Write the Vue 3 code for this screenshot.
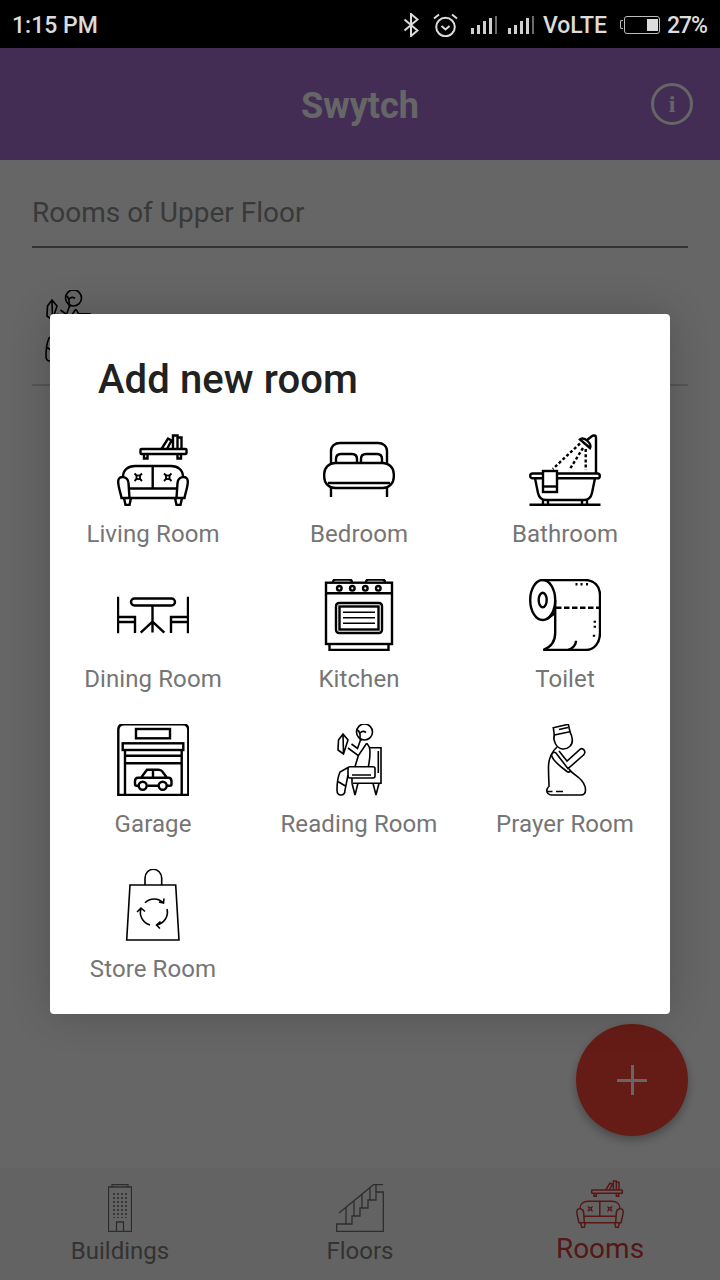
<script setup>
const rooms = [
  { name: 'Living Room', icon: 'sofa' },
  { name: 'Bedroom', icon: 'bed' },
  { name: 'Bathroom', icon: 'bath' },
  { name: 'Dining Room', icon: 'dining' },
  { name: 'Kitchen', icon: 'oven' },
  { name: 'Toilet', icon: 'toilet' },
  { name: 'Garage', icon: 'garage' },
  { name: 'Reading Room', icon: 'reader', thin: true },
  { name: 'Prayer Room', icon: 'prayer', thin: true },
  { name: 'Store Room', icon: 'store', thin: true },
]
</script>

<template>
  <div class="phone">
    <svg class="sprite" xmlns="http://www.w3.org/2000/svg">
      <symbol id="sofa" viewBox="0 0 72 72">
        <rect x="23.5" y="15" width="46" height="5" rx="1" />
        <path d="M27 20v4.500h3.500V20M60.500 20v4.500H64V20" />
        <path d="M44.500 15L51 4.500l3.500 2L50 15M56 15V1.500h4.500V15M60.500 15V3.500h4V15" />
        <path d="M6 43c0-7 5-11 12-11h36c7 0 12 4 12 11M35.700 32v22.500M12 54.500h48M12 64h48" />
        <path d="M12.500 64l-1-15c-.5-7-10-8-10.300-2-.2 6 2.800 13 3.300 17z" />
        <path d="M59.500 64l1-15c.5-7 10-8 10.300-2 .2 6-2.800 13-3.300 17z" />
        <path d="M7 64l1.500 7h4l1.500-7M58 64l1.500 7h4l1.500-7" />
        <g stroke-width="1.800">
          <path d="M17.500 39.500l2.500 2.500M25 39.500L22.500 42M17.500 47l2.500-2.500M25 47l-2.500-2.500M47 39.500l2.500 2.500M54.500 39.500L52 42M47 47l2.500-2.500M54.500 47L52 44.500" />
          <rect x="19.500" y="41.500" width="3.500" height="3.500" />
          <rect x="49" y="41.500" width="3.500" height="3.500" />
        </g>
      </symbol>
      <symbol id="bed" viewBox="0 0 72 72">
        <path d="M8 29V17c0-5 4-8 9-8h38c5 0 9 3 9 8v12" />
        <path d="M13 29v-4c0-3 2-5 5-5h11c3 0 5 2 5 5v4M38 29v-4c0-3 2-5 5-5h11c3 0 5 2 5 5v4" />
        <rect x="1.200" y="29" width="69.600" height="25" rx="11" />
        <path d="M5 49h62M8 54v9M64 54v9" />
      </symbol>
      <symbol id="bath" viewBox="0 0 72 72">
        <path d="M0.500 70.700h71M14 66v4.700h5V66M53 66v4.700h5V66" />
        <rect x="1.200" y="39.500" width="69.600" height="4.800" rx="2.400" />
        <path d="M6 44.300l3 14.700c1 4.500 4 7 8 7h38c4 0 7-2.500 8-7l3-14.700" />
        <rect x="14" y="37" width="14" height="21" fill="#fff" />
        <path d="M14 52.500h14" />
        <path d="M67 39.500V3.500c0-2.500-3-2.500-4.500-1L58 6" />
        <path d="M51 5.500c2-1.500 5-1 7.500 1.500 2.500 2.500 3.500 5 2.500 7z" />
        <path d="M51 9.500L23.700 35M54 14L40.300 36M56.700 15v21" stroke-dasharray="3 2.200" />
      </symbol>
      <symbol id="dining" viewBox="0 0 72 72">
        <rect x="14" y="19.500" width="44" height="7" rx="3.500" />
        <path d="M35.500 26.500v27M35.500 42.700L23.700 53.700M35.500 42.700L47.300 53.700" />
        <path d="M1 17.700v36.600M1 38h17v16M1 43h17" />
        <path d="M71 17.700v36.600M71 38H54v16M71 43H54" />
      </symbol>
      <symbol id="oven" viewBox="0 0 72 72">
        <path d="M10 3.500c0-2 1-3 3-3h13c2 0 3 1 3 3M43 3.500c0-2 1-3 3-3h13c2 0 3 1 3 3" />
        <rect x="3" y="3.700" width="66" height="61.300" />
        <path d="M3 14.300h66M6.500 65v6h59v-6" />
        <circle cx="16.300" cy="9.300" r="2.300" />
        <circle cx="29.300" cy="9.300" r="2.300" />
        <circle cx="42.300" cy="9.300" r="2.300" />
        <circle cx="55.300" cy="9.300" r="2.300" />
        <rect x="13" y="24" width="46" height="30" rx="3" />
        <rect x="16.500" y="27.500" width="39" height="23" />
        <path d="M20 33.300h32M20 38.700h32M20 44.300h32" stroke-width="1.600" />
      </symbol>
      <symbol id="toilet" viewBox="0 0 72 72">
        <ellipse cx="13.700" cy="21" rx="12.500" ry="20" />
        <ellipse cx="13.700" cy="21" rx="4" ry="7.300" />
        <path d="M13.700 1H56c9 0 15 6 15 15v38c0 10-6 17-14 17H14.300" />
        <path d="M26.200 21v33c0 8-4 14-12 17M17.700 40.300L26 34M47 61.700c0 4-3 8-7.700 9.300" />
        <path d="M27 28.700h44" stroke-dasharray="5.500 2.500" />
        <path d="M46.500 5.300h2M51.500 5.300h2M57 5.300h2M65.800 41.700v2M65.800 46.700v2M65 55.700v2" />
      </symbol>
      <symbol id="garage" viewBox="0 0 72 72">
        <path d="M1.300 71V6c0-3.500 2-5.700 5.500-5.700h59c3.500 0 5.500 2.200 5.500 5.700v65z" />
        <rect x="19" y="5" width="34" height="9.300" />
        <rect x="5.700" y="19.300" width="60.600" height="6.700" />
        <path d="M8 26v45M64.700 26v45M8 31.700h56.700M8 39.300h56.700" />
        <path d="M21 61.700h-1.500c-1 0-1.500-.5-1.500-1.500v-3c0-2 1-3.500 3-3.500h3l6-8h11.500c2 0 3 .5 4 2l4.500 6h1.500c2 0 3 1.500 3 3.500v3c0 1-.5 1.500-1.500 1.500h-3M30.500 61.700h10.500M24 53.700h26M36 45.700v8" />
        <circle cx="25.700" cy="61.700" r="4" />
        <circle cx="45.700" cy="61.700" r="4" />
      </symbol>
      <symbol id="reader" viewBox="0 0 72 72">
        <circle cx="41.500" cy="8" r="8" />
        <path d="M34.500 6c2 1.500 3 4 2.500 7.500-.2 1.500.5 2.500 1.500 3M37 9c1.500-1.500 4-2 6-.5" />
        <path d="M15.500 16l4.500-6 5 6-4.500 14-5.500-4zM20 10l.5 20" />
        <path d="M25 24l10.300 7.700 8.400-12.400M28.500 20l6 4.500 3-8.500M43.700 19.300c2.500 2.500 3.300 5 3.300 8.400 0 5-.5 10-1.700 15M35.300 31.700L32 42.700" />
        <path d="M46 23.700h12v35.600H30M55.300 27v22" />
        <rect x="25" y="42.700" width="27" height="11.300" rx="2" />
        <path d="M29 51h19M29 54v5.300M29 59.300l3 11.700 3-11.700M50 59.300l3 11.700 3-11.700" />
        <path d="M25 43.500L17 48c-3 7-3 14-3 18 0 4 2 5 4 5 3 0 4-2 4-5l3-15M15.300 57.700l6.700 4" />
      </symbol>
      <symbol id="prayer" viewBox="0 0 72 72">
        <path d="M24.300 3.700l15-3.400 1.700 7.400-15.700 3.300zM30 5.500l9 -2" />
        <path d="M25.300 11c-1.500 5 1.500 13 8 14 6 .5 10.500-4 10-9.500-.2-3-1.500-6-2.500-7.800" />
        <path d="M28 23c-5 4-8.500 12-8.500 20 0 8 .5 16 .5 20" />
        <path d="M19.500 63c-1.500 1.500-2.500 4-.5 6.500 1 1 2 1.500 3.500 1.500H52c3 0 4.500-2 4.500-5 0-5-2.500-9-7.500-13-4-3-7-5-9-8" />
        <path d="M22.500 30.500c1-2 3-3 4.500-1.500l12 15.700L54.500 31c2-1.500 1.500-4.500 0-5.500-1-1-2-1-3-.5L38 37 30 27" />
        <path d="M22.500 30.500c0 3 4 8.500 15.500 17 1.500 1 3 .5 4-.5" />
        <path d="M18 67.500h5.500M27 67.500h7" />
      </symbol>
      <symbol id="store" viewBox="0 0 72 72">
        <path d="M13 16h45.700L62 71H9.700z" />
        <path d="M28 16V9c0-5 4-8.700 8.300-8.700S44.700 4 44.700 9v7" />
        <path d="M28 33.700a13 13 0 0 1 18.500.2M42 33l4.500 1 .5-4.500" />
        <path d="M50 40a13 13 0 0 1-10.500 16M43.500 52.500l-4 3.500 3.500 3.500" />
        <path d="M33 56a13 13 0 0 1-9-16.500M20 43l4-4 4 3.500" />
      </symbol>
      <symbol id="building" viewBox="0 0 24 48">
        <path d="M0.500 47.500V3h23v44.500zM4 3V0.500h16V3M8.500 47.500V38h7v9.500" />
        <path d="M6 9v25M10 9v25M14 9v25M18 9v25" stroke-dasharray="2 2" stroke-width="1.700" />
      </symbol>
      <symbol id="stairs" viewBox="0 0 48 48">
        <path d="M.700 47.300h46.600V8H40v8h-8v8h-8v8h-8v8H.700z" />
        <path d="M3 29L37.500.7H47M10 23.500V40M18 17v15M26 10.500V24M34 4v12M40 1v7" />
      </symbol>
    </svg>

    <div class="status-bar">
      <span class="clock">1:15 PM</span>
      <div class="status-right">
        <svg class="bt" viewBox="0 0 16 24">
          <path d="M1.500 6.500l13 11L8 23V1l6.500 5.500-13 11" />
        </svg>
        <svg class="alarm" viewBox="0 0 25 24">
          <circle cx="12.500" cy="14" r="9.300" />
          <path d="M8.500 13l4 3.500 4-3.500M1 5.500L6 1.500M24 5.500L19 1.500" />
        </svg>
        <div class="signal">
          <i style="height: 6px" /><i style="height: 9px" /><i style="height: 13px" /><i style="height: 16px" /><i class="off" style="height: 18px" />
        </div>
        <div class="signal second">
          <i style="height: 6px" /><i style="height: 9px" /><i style="height: 13px" /><i style="height: 16px" /><i class="off" style="height: 18px" />
        </div>
        <span class="volte">VoLTE</span>
        <div class="battery"><div class="battery-fill" /></div>
        <span class="percent">27%</span>
      </div>
    </div>

    <header class="app-bar">
      <h1>Swytch</h1>
      <div class="info">i</div>
    </header>

    <main class="content">
      <div class="field">Rooms of Upper Floor</div>
      <div class="room-row">
        <svg class="icon thin"><use href="#reader" /></svg>
      </div>
    </main>

    <nav class="tabs">
      <div class="tab">
        <svg class="tab-icon building"><use href="#building" /></svg>
        <span>Buildings</span>
      </div>
      <div class="tab">
        <svg class="tab-icon"><use href="#stairs" /></svg>
        <span>Floors</span>
      </div>
      <div class="tab active">
        <svg class="tab-icon"><use href="#sofa" /></svg>
        <span>Rooms</span>
      </div>
    </nav>

    <button class="fab"><span class="plus" /></button>

    <div class="scrim">
      <div class="dialog">
        <h2>Add new room</h2>
        <div class="room-grid">
          <div v-for="room in rooms" :key="room.name" class="room">
            <svg class="icon" :class="{ thin: room.thin }"><use :href="'#' + room.icon" /></svg>
            <span>{{ room.name }}</span>
          </div>
        </div>
      </div>
    </div>
  </div>
</template>

<style scoped>
.phone {
  position: relative;
  width: 720px;
  height: 1280px;
  display: flex;
  flex-direction: column;
  overflow: hidden;
  background: #fff;
  font-family: Roboto, "Liberation Sans", sans-serif;
}
.sprite {
  display: none;
}

.status-bar {
  position: relative;
  z-index: 5;
  height: 48px;
  flex: none;
  box-sizing: border-box;
  padding: 2px 13px 0 12px;
  background: #000;
  color: #dcdcdc;
  display: flex;
  align-items: center;
  justify-content: space-between;
  font-size: 23px;
  font-weight: 500;
}
.status-right {
  display: flex;
  align-items: center;
}
.status-right svg {
  fill: none;
  stroke: #dcdcdc;
  stroke-width: 2;
}
.bt {
  width: 16px;
  height: 24px;
}
.alarm {
  width: 25px;
  height: 24px;
  margin-left: 14px;
}
.signal {
  display: flex;
  align-items: flex-end;
  gap: 3px;
  height: 18px;
  margin-left: 13px;
}
.signal.second {
  margin-left: 11px;
}
.signal i {
  width: 3px;
  background: #d0d0d0;
}
.signal i.off {
  width: 2px;
  background: #6a6a6a;
}
.volte {
  margin-left: 9px;
}
.battery {
  position: relative;
  width: 36px;
  height: 18px;
  margin-left: 17px;
  box-sizing: border-box;
  border: 1.500px solid #bdbdbd;
  border-radius: 3px;
}
.battery::before {
  content: "";
  position: absolute;
  left: -5px;
  top: 3px;
  width: 3px;
  height: 9px;
  border: 1.500px solid #bdbdbd;
  border-right: 0;
  box-sizing: border-box;
  border-radius: 2px 0 0 2px;
}
.battery-fill {
  width: 11px;
  height: 12px;
  margin: 1.500px 1px 0 auto;
  background: #dcdcdc;
}
.percent {
  margin-left: 7px;
  letter-spacing: -1px;
}

.app-bar {
  height: 112px;
  flex: none;
  background: #a870d4;
  display: flex;
  align-items: center;
  justify-content: center;
  position: relative;
  color: #fff;
}
.app-bar h1 {
  margin: 4px 0 0;
  font-size: 36px;
  font-weight: 700;
}
.info {
  position: absolute;
  right: 27px;
  top: 35px;
  width: 42px;
  height: 42px;
  box-sizing: border-box;
  border: 3px solid #fff;
  border-radius: 50%;
  display: flex;
  align-items: center;
  justify-content: center;
  font: 700 24px "Liberation Serif", serif;
}

.content {
  flex: 1;
  padding: 0 32px;
  background: #fff;
}
.field {
  height: 88px;
  box-sizing: border-box;
  padding-top: 35px;
  line-height: 35px;
  font-size: 28px;
  color: #909090;
  border-bottom: 2px solid #808080;
}
.room-row {
  height: 138px;
  box-sizing: border-box;
  padding-top: 42px;
  border-bottom: 2px solid #d4d4d4;
}

.tabs {
  height: 114px;
  flex: none;
  box-sizing: border-box;
  border-top: 2px solid #fff;
  background: #f8f8f8;
  display: flex;
  color: #808080;
}
.tab {
  width: 240px;
  display: flex;
  flex-direction: column;
  align-items: center;
  padding-top: 16px;
  font-size: 24px;
  line-height: 32px;
}
.tab-icon {
  display: block;
  width: 48px;
  height: 48px;
  margin-bottom: 3px;
  fill: none;
  stroke: #707070;
  stroke-width: 1.300;
}
.tab-icon.building {
  width: 24px;
}
.tab.active {
  color: #d83a3a;
  padding-top: 12px;
  font-size: 28px;
}
.tab.active .tab-icon {
  stroke: #d83a3a;
  stroke-width: 2.300;
  margin-bottom: 5px;
}

.fab {
  position: absolute;
  left: 576px;
  top: 1024px;
  width: 112px;
  height: 112px;
  padding: 0;
  border: 0;
  border-radius: 50%;
  background: #ff4639;
  box-shadow: 0 4px 10px rgba(0, 0, 0, 0.3);
}
.plus {
  position: absolute;
  left: 41px;
  top: 54.500px;
  width: 30px;
  height: 3px;
  background: #fff;
}
.plus::after {
  content: "";
  position: absolute;
  left: 13.500px;
  top: -13.500px;
  width: 3px;
  height: 30px;
  background: #fff;
}

.scrim {
  position: absolute;
  inset: 0;
  z-index: 3;
  background: rgba(0, 0, 0, 0.6);
  display: flex;
  justify-content: center;
  align-items: flex-start;
  padding-top: 314px;
  box-sizing: border-box;
}
.dialog {
  width: 620px;
  height: 700px;
  box-sizing: border-box;
  background: #fff;
  border-radius: 4px;
  box-shadow: 0 0 40px rgba(0, 0, 0, 0.2);
}
.dialog h2 {
  margin: 0;
  padding: 42px 0 0 48px;
  height: 120px;
  box-sizing: border-box;
  font-size: 40px;
  line-height: 48px;
  font-weight: 500;
  letter-spacing: 0.1px;
  color: #212121;
}
.room-grid {
  display: grid;
  grid-template-columns: repeat(3, 206px);
  row-gap: 31px;
}
.room {
  display: flex;
  flex-direction: column;
  align-items: center;
  color: #757575;
  font-size: 24px;
  line-height: 28px;
  letter-spacing: 0.1px;
  white-space: nowrap;
}
.room span {
  margin-top: 14px;
}
.icon {
  display: block;
  width: 72px;
  height: 72px;
  fill: none;
  stroke: #000;
  stroke-width: 2.400;
}
.icon.thin {
  stroke-width: 1.600;
}
</style>
